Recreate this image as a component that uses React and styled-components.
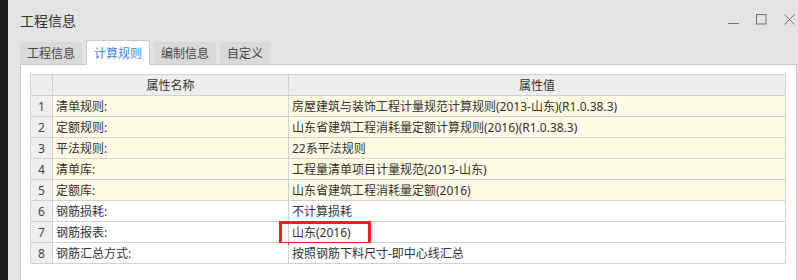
import React from 'react'
import styled, { createGlobalStyle } from 'styled-components'

const GlobalStyle = createGlobalStyle`
  html, body {
    margin: 0;
    padding: 0;
    background: #e3e3e3;
  }
  body {
    font-family: "Noto Sans", "Noto Sans CJK SC", sans-serif;
    color: #333;
  }
`

const rows = [
  { name: '清单规则:', value: '房屋建筑与装饰工程计量规范计算规则(2013-山东)(R1.0.38.3)', hl: true },
  { name: '定额规则:', value: '山东省建筑工程消耗量定额计算规则(2016)(R1.0.38.3)', hl: true },
  { name: '平法规则:', value: '22系平法规则', hl: true },
  { name: '清单库:', value: '工程量清单项目计量规范(2013-山东)', hl: true },
  { name: '定额库:', value: '山东省建筑工程消耗量定额(2016)', hl: true },
  { name: '钢筋损耗:', value: '不计算损耗' },
  { name: '钢筋报表:', value: '山东(2016)', marked: true },
  { name: '钢筋汇总方式:', value: '按照钢筋下料尺寸-即中心线汇总' },
]

const tabs = ['工程信息', '计算规则', '编制信息', '自定义']

const Screen = styled.div`
  display: flex;
  height: 280px;
  overflow: hidden;
`

const Edge = styled.div`
  width: 8px;
  flex: none;
  background: #1c1c1c;
`

const Window = styled.div`
  flex: 1;
  display: flex;
  flex-direction: column;
  padding: 0 2px 0 12px;
`

const TitleBar = styled.div`
  height: 38px;
  display: flex;
  align-items: center;
  justify-content: space-between;
`

const Title = styled.div`
  font-size: 14px;
  color: #333;
  padding-top: 1px;
`

const Controls = styled.div`
  display: flex;
  align-items: center;
  gap: 17px;
  margin-right: 2px;
  svg {
    display: block;
  }
`

const TabBar = styled.div`
  height: 26px;
  display: flex;
  align-items: flex-end;
  gap: 4px;
`

const Tab = styled.div`
  height: ${p => (p.active ? '25px' : '22px')};
  box-sizing: border-box;
  padding: 0 7px;
  display: flex;
  align-items: center;
  font-size: 12px;
  border-radius: 3px 3px 0 0;
  background: ${p => (p.active ? '#fff' : '#d9d9d9')};
  color: ${p => (p.active ? '#3b87e2' : '#444')};
  border: ${p => (p.active ? '1px solid #c5ccd3' : 'none')};
  border-bottom: none;
  margin-bottom: ${p => (p.active ? '-1px' : '0')};
  position: relative;
  z-index: 1;
`

const Panel = styled.div`
  flex: 1;
  background: #fff;
  border: 1px solid #c9c9c9;
  border-bottom: none;
  padding: 9px 10px 0 9px;
`

const Table = styled.table`
  border-collapse: collapse;
  width: 756px;
  table-layout: fixed;
  font-size: 12px;
  border: 1px solid #c9c9c9;
`

const HeadCell = styled.th`
  height: 20px;
  padding: 0;
  font-weight: normal;
  background: #eeeeee;
  color: #333;
  text-align: center;
  border: 1px solid #d2d2d2;
`

const NumCell = styled.td`
  height: 20px;
  padding: 0;
  background: #efefef;
  color: #444;
  text-align: center;
  border: 1px solid #d2d2d2;
`

const Cell = styled.td`
  height: 20px;
  padding: 0 0 0 3px;
  background: ${p => (p.hl ? '#fffbe4' : '#fff')};
  color: #333;
  white-space: nowrap;
  border: 1px solid #d2d2d2;
  position: relative;
`

const Mark = styled.span`
  position: absolute;
  left: -10px;
  top: -1px;
  width: 92px;
  height: 24px;
  box-sizing: border-box;
  border: 3px solid #f51c1c;
`

export default function App() {
  return (
    <Screen>
      <GlobalStyle />
      <Edge />
      <Window>
        <TitleBar>
          <Title>工程信息</Title>
          <Controls>
            <svg width="11" height="11" viewBox="0 0 11 11">
              <path d="M0 9.5H11" stroke="#737373" strokeWidth="1" />
            </svg>
            <svg width="11" height="11" viewBox="0 0 11 11">
              <rect x="0.5" y="0.5" width="9.5" height="9.5" fill="none" stroke="#737373" strokeWidth="1" />
            </svg>
            <svg width="11" height="11" viewBox="0 0 11 11">
              <path d="M0.5 0.5L10.5 10.5M10.5 0.5L0.5 10.5" stroke="#737373" strokeWidth="1" />
            </svg>
          </Controls>
        </TitleBar>
        <TabBar>
          {tabs.map((t, i) => (
            <Tab key={t} active={i === 1}>{t}</Tab>
          ))}
        </TabBar>
        <Panel>
          <Table>
            <colgroup>
              <col style={{ width: 22 }} />
              <col style={{ width: 236 }} />
              <col />
            </colgroup>
            <thead>
              <tr>
                <HeadCell />
                <HeadCell>属性名称</HeadCell>
                <HeadCell>属性值</HeadCell>
              </tr>
            </thead>
            <tbody>
              {rows.map((r, i) => (
                <tr key={i}>
                  <NumCell>{i + 1}</NumCell>
                  <Cell hl={r.hl}>{r.name}</Cell>
                  <Cell hl={r.hl}>
                    {r.value}
                    {r.marked && <Mark />}
                  </Cell>
                </tr>
              ))}
            </tbody>
          </Table>
        </Panel>
      </Window>
    </Screen>
  )
}
